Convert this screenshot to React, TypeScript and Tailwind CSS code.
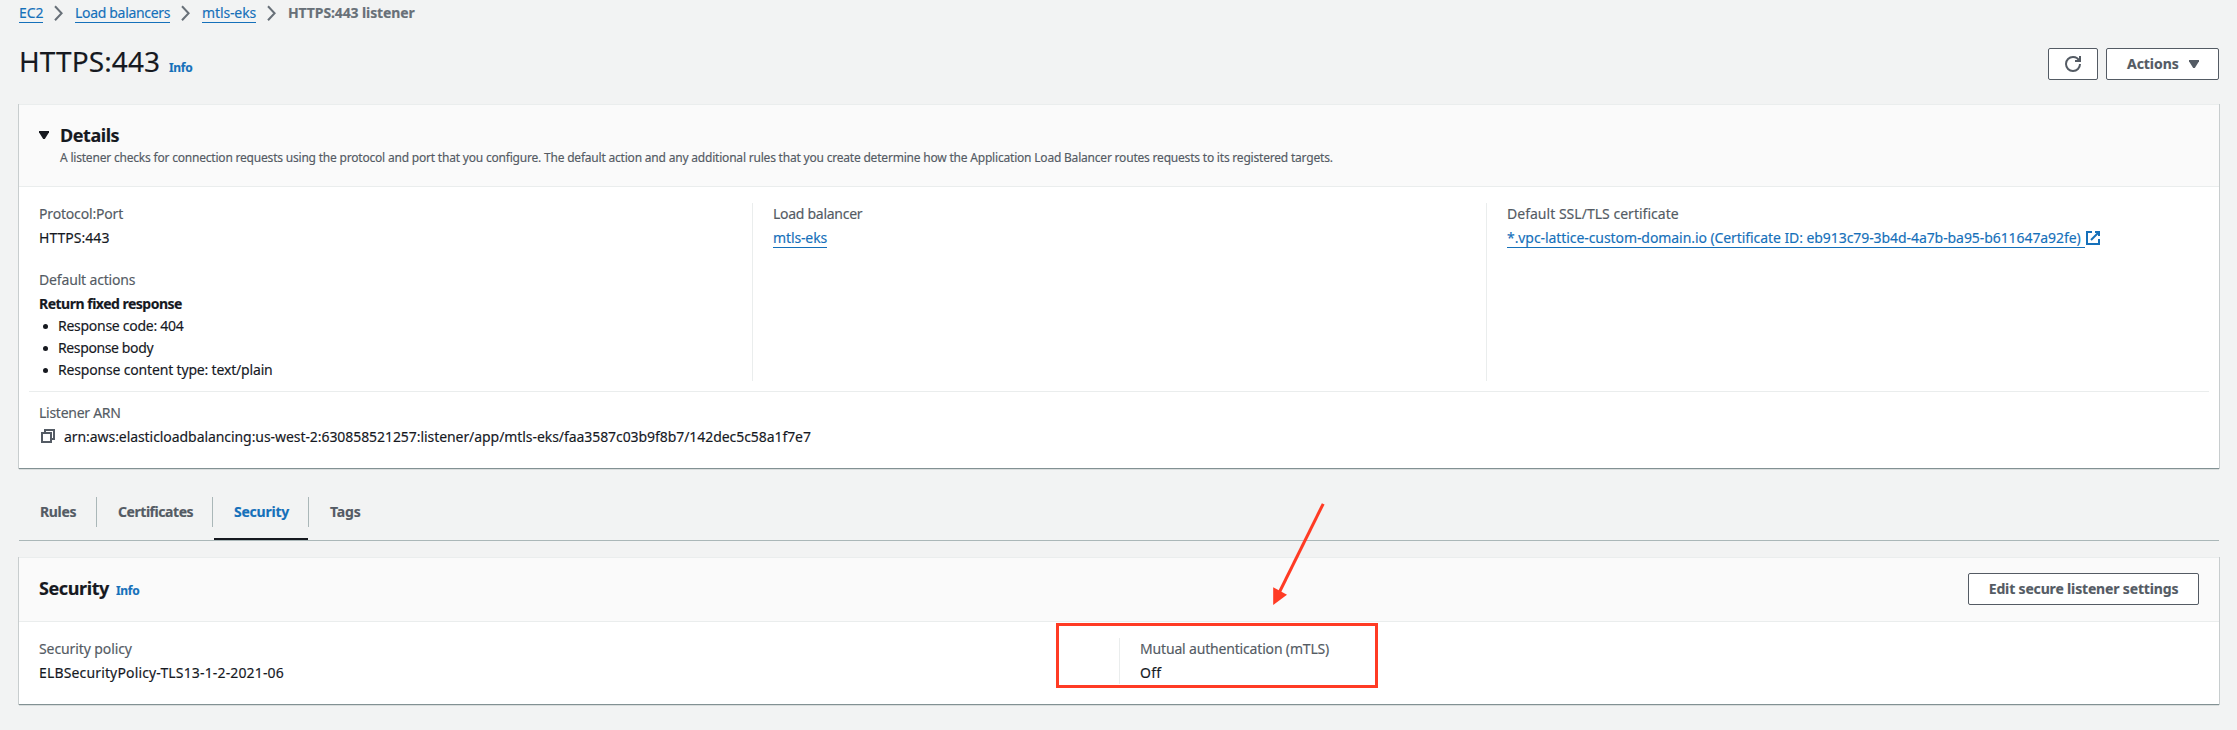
import type { ReactNode } from "react";

const panel =
  "border-t border-b border-t-[#eaeded] border-b-[#829193] bg-white shadow-[1px_0_0_#c8cdce,-1px_0_0_#c8cdce,0_1px_0_#d9dddd]";

function Chevron() {
  return (
    <svg className="mt-[3px] size-4 shrink-0" viewBox="0 0 16 16" fill="none" stroke="#687078" strokeWidth="2">
      <path d="M4 1.2 10.6 8.2 4 15.2" />
    </svg>
  );
}

function Caret({ className }: { className: string }) {
  return (
    <svg className={`h-[8px] w-[10px] shrink-0 ${className}`} viewBox="0 0 10 8" fill="currentColor">
      <path d="M0 0h10v1.2L5.8 8H4.2L0 1.2z" />
    </svg>
  );
}

function RefreshIcon() {
  return (
    <svg className="size-4" viewBox="0 0 16 16" fill="none" stroke="currentColor" strokeWidth="2">
      <path d="M10 5h5V0" />
      <path d="M15 8a6.957 6.957 0 0 1-7 7 6.957 6.957 0 0 1-7-7 6.957 6.957 0 0 1 7-7 6.87 6.87 0 0 1 6.3 4" />
    </svg>
  );
}

function CopyIcon() {
  return (
    <svg className="mt-[2px] size-4" viewBox="0 0 16 16" fill="none" stroke="#545b64" strokeWidth="2">
      <path d="M2 5h9v9H2z" />
      <path d="M5 5V2h9v9h-3" />
    </svg>
  );
}

function ExternalIcon() {
  return (
    <svg className="mt-[3px] size-4" viewBox="0 0 16 16" fill="none" stroke="currentColor" strokeWidth="2">
      <path d="M10 2h4v4" />
      <path d="m6 10 8-8" />
      <path d="M14 9.05V14H2V2h5" />
    </svg>
  );
}

function Link({ className, children }: { className: string; children: ReactNode }) {
  return (
    <a className={`block h-[21px] border-b border-[#1570ba] leading-[22px] whitespace-nowrap text-[#1570ba] ${className}`}>
      {children}
    </a>
  );
}

function Label({ className, children }: { className: string; children: ReactNode }) {
  return <div className={`h-[22px] leading-[22px] text-[#545b64] ${className}`}>{children}</div>;
}

function Value({ className, children }: { className: string; children: ReactNode }) {
  return <div className={`h-[22px] leading-[22px] ${className}`}>{children}</div>;
}

function Bullet({ className, children }: { className: string; children: ReactNode }) {
  return (
    <li className="flex h-[22px] leading-[22px]">
      <span className="mt-[9px] mr-[10px] ml-[4px] size-[5px] rounded-full bg-[#16191f]" />
      <span className={className}>{children}</span>
    </li>
  );
}

function Tab({ width, active, last, children }: { width: string; active?: boolean; last?: boolean; children: ReactNode }) {
  return (
    <div className={`flex h-[43px] flex-col justify-between ${width}`}>
      <div
        className={`h-[30px] py-1 pl-[21px] leading-[22px] font-bold ${last ? "" : "border-r border-[#aab7b8]"} ${
          active ? "text-[#1570ba]" : "text-[#545b64]"
        }`}
      >
        {children}
      </div>
      {active && <div className="mr-px ml-px h-[2px] bg-[#16191f]" />}
    </div>
  );
}

export default function App() {
  return (
    <div className="relative h-[730px] w-[2237px] overflow-hidden bg-[#f2f3f3] pt-[2px] pr-[18px] pl-[19px] font-['Noto_Sans','Open_Sans',sans-serif] text-[14px] whitespace-nowrap text-[#16191f] [-webkit-text-stroke:0.15px]">
      <nav className="flex h-[21px] items-start gap-2">
        <Link className="w-[24px] tracking-[-0.1px]">EC2</Link>
        <Chevron />
        <Link className="w-[95px] tracking-[-0.32px]">Load balancers</Link>
        <Chevron />
        <Link className="w-[54px] tracking-[-0.12px]">mtls-eks</Link>
        <Chevron />
        <span className="leading-[22px] font-bold tracking-[-0.11px] text-[#687078]">HTTPS:443 listener</span>
      </nav>

      <header className="mt-5 flex h-[37px] justify-between">
        <div className="flex items-baseline">
          <h1 className="w-[150px] text-[28px] leading-[36px] tracking-[0.1px]">HTTPS:443</h1>
          <a className="text-[12px] leading-4 font-bold tracking-[-0.3px] text-[#1570ba]">Info</a>
        </div>
        <div className="mt-[5px] flex gap-2 text-[#545b64]">
          <button className="flex h-8 w-[50px] items-center justify-center rounded-[2px] border border-[#545b64] bg-white">
            <RefreshIcon />
          </button>
          <button className="flex h-8 w-[113px] items-center rounded-[2px] border border-[#545b64] bg-white pl-5 font-bold">
            <span className="w-[62px] text-left leading-[22px] tracking-[-0.05px]">Actions</span>
            <Caret className="" />
          </button>
        </div>
      </header>

      <section className={`mt-6 ${panel}`}>
        <div className="flex h-[82px] border-b border-[#eaeded] bg-[#fafafa] pt-[19px] pl-5">
          <Caret className="mt-[7px] mr-[11px]" />
          <div>
            <h2 className="h-[22px] text-[18px] leading-[22px] font-bold tracking-[-0.45px]">Details</h2>
            <p className="mt-[4px] text-[12px] leading-4 tracking-[-0.2px] text-[#545b64]">
              A listener checks for connection requests using the protocol and port that you configure. The default action and any
              additional rules that you create determine how the Application Load Balancer routes requests to its registered targets.
            </p>
          </div>
        </div>
        <div className="flex h-[194px] pt-4">
          <div className="w-[733px] pl-5">
            <Label className="tracking-[-0.17px]">Protocol:Port</Label>
            <Value className="mt-[2px] tracking-[0.03px]">HTTPS:443</Value>
            <Label className="mt-5 tracking-[-0.16px]">Default actions</Label>
            <Value className="mt-[2px] font-bold tracking-[-0.5px]">Return fixed response</Value>
            <ul>
              <Bullet className="tracking-[-0.27px]">Response code: 404</Bullet>
              <Bullet className="tracking-[-0.38px]">Response body</Bullet>
              <Bullet className="tracking-[-0.17px]">Response content type: text/plain</Bullet>
            </ul>
          </div>
          <div className="h-[178px] w-[734px] border-l border-[#eaeded] pl-5">
            <Label className="tracking-[-0.28px]">Load balancer</Label>
            <Link className="mt-[2px] w-[54px] tracking-[-0.12px]">mtls-eks</Link>
          </div>
          <div className="h-[178px] border-l border-[#eaeded] pl-5">
            <Label className="tracking-[0.02px]">Default SSL/TLS certificate</Label>
            <div className="mt-[2px] flex text-[#1570ba]">
              <Link className="w-[578px] tracking-[-0.074px]">
                *.vpc-lattice-custom-domain.io (Certificate ID: eb913c79-3b4d-4a7b-ba95-b611647a92fe)
              </Link>
              <ExternalIcon />
            </div>
          </div>
        </div>
        <div className="mx-[10px] mt-[10px] border-t border-[#eaeded] pt-[10px] pb-5 pl-[10px]">
          <Label className="tracking-[-0.27px]">Listener ARN</Label>
          <div className="mt-[2px] flex">
            <div className="w-[25px] pl-px">
              <CopyIcon />
            </div>
            <Value className="tracking-[-0.067px]">
              arn:aws:elasticloadbalancing:us-west-2:630858521257:listener/app/mtls-eks/faa3587c03b9f8b7/142dec5c58a1f7e7
            </Value>
          </div>
        </div>
      </section>

      <div className="mt-7 flex h-11 border-b border-[#aab7b8]">
        <Tab width="w-[78px]">
          <span className="tracking-[-0.35px]">Rules</span>
        </Tab>
        <Tab width="w-[116px]">
          <span className="tracking-[-0.45px]">Certificates</span>
        </Tab>
        <Tab width="w-[96px]" active>
          <span className="tracking-[-0.23px]">Security</span>
        </Tab>
        <Tab width="w-[80px]" last>
          <span className="tracking-[-0.15px]">Tags</span>
        </Tab>
      </div>

      <section className={`mt-4 ${panel}`}>
        <div className="flex h-16 justify-between border-b border-[#eaeded] bg-[#fafafa] pt-[15px] pr-5 pl-5">
          <div className="mt-[4px] flex items-baseline">
            <h2 className="w-[77px] text-[18px] leading-[22px] font-bold tracking-[-0.4px]">Security</h2>
            <a className="text-[12px] leading-4 font-bold tracking-[-0.3px] text-[#1570ba]">Info</a>
          </div>
          <button className="flex h-8 w-[231px] items-center justify-center rounded-[2px] border border-[#545b64] bg-white leading-[22px] font-bold tracking-[-0.16px] text-[#545b64]">
            Edit secure listener settings
          </button>
        </div>
        <div className="flex pt-4 pb-5">
          <div className="w-[1100px] pl-5">
            <Label className="tracking-[-0.1px]">Security policy</Label>
            <Value className="mt-[2px] tracking-[0.15px]">ELBSecurityPolicy-TLS13-1-2-2021-06</Value>
          </div>
          <div className="border-l border-[#eaeded] pl-5">
            <Label className="tracking-[-0.17px]">Mutual authentication (mTLS)</Label>
            <Value className="mt-[2px] tracking-[0.3px]">Off</Value>
          </div>
        </div>
      </section>

      <div className="absolute top-[623px] left-[1056px] h-[65px] w-[322px] border-[3px] border-[#ff3b24]" />
      <svg className="absolute top-[500px] left-[1265px] h-[110px] w-[70px]" viewBox="0 0 70 110">
        <path d="M58.2 3.8 14.5 92" stroke="#ff3b24" strokeWidth="3" fill="none" />
        <path d="M8.2 87.3 22 94.8 8.2 105z" fill="#ff3b24" />
      </svg>
    </div>
  );
}
